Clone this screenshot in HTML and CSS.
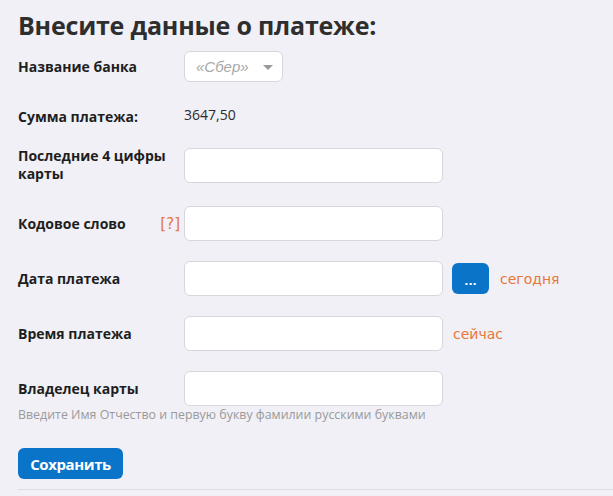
FILE: index.html
```html
<!DOCTYPE html>
<html lang="ru">
<head>
<meta charset="utf-8">
<link rel="stylesheet" href="styles.css">
</head>
<body>
<div class="page">
  <h1 class="title">Внесите данные о платеже:</h1>
  <form class="form">
    <div class="row row-bank">
      <div class="label">Название банка</div>
      <div class="control">
        <div class="select"><span class="select-text">«Сбер»</span><span class="caret"></span></div>
      </div>
    </div>
    <div class="row row-sum">
      <div class="label">Сумма платежа:</div>
      <div class="control"><span class="sum">3647,50</span></div>
    </div>
    <div class="row row-card">
      <div class="label">Последние 4 цифры карты</div>
      <div class="control"><input class="input" type="text"></div>
    </div>
    <div class="row row-code">
      <div class="label label-help">Кодовое слово <span class="help">[?]</span></div>
      <div class="control"><input class="input" type="text"></div>
    </div>
    <div class="row">
      <div class="label">Дата платежа</div>
      <div class="control"><input class="input" type="text"><button type="button" class="dots">...</button><span class="link link-today">сегодня</span></div>
    </div>
    <div class="row">
      <div class="label">Время платежа</div>
      <div class="control"><input class="input" type="text"><span class="link link-now">сейчас</span></div>
    </div>
    <div class="row">
      <div class="label">Владелец карты</div>
      <div class="control"><input class="input" type="text"></div>
    </div>
    <div class="hint">Введите Имя Отчество и первую букву фамилии русскими буквами</div>
    <div class="actions"><button type="button" class="save">Сохранить</button></div>
  </form>
</div>
</body>
</html>
```
FILE: styles.css
```css
html, body {
  margin: 0;
  padding: 0;
  background: #f0f0f6;
}
.page {
  padding: 8px 0 0 18px;
  color: #222;
}
.title {
  margin: 0;
  font-family: "Open Sans", sans-serif;
  font-weight: 700;
  font-size: 25px;
  line-height: 34px;
  letter-spacing: -0.2px;
  color: #2e2e2e;
}
.form {
  display: flex;
  flex-direction: column;
}
.row {
  display: grid;
  grid-template-columns: 166px auto;
  align-items: center;
  margin-top: 20px;
}
.row-bank { margin-top: 9px; }
.row-sum { margin-top: 25px; height: 20px; }
.row-code { margin-top: 23px; }
.label {
  font-family: "Open Sans", sans-serif;
  font-weight: bold;
  font-size: 14px;
  line-height: 18px;
  color: #1e1e1e;
  padding-right: 8px;
}
.label-help {
  display: flex;
  justify-content: space-between;
  padding-right: 4px;
}
.help {
  font-family: "DejaVu Sans", sans-serif;
  font-weight: normal;
  color: #e8773a;
  font-size: 15px;
}
.control {
  display: flex;
  align-items: center;
}
.select {
  box-sizing: border-box;
  width: 99px;
  height: 31px;
  background: #fff;
  border: 1px solid #d6d6dc;
  border-radius: 6px;
  display: flex;
  align-items: center;
  padding-left: 11px;
}
.select-text {
  font-family: "Liberation Sans", sans-serif;
  font-style: italic;
  font-size: 15px;
  color: #a8a8a8;
}
.caret {
  margin-left: 14px;
  width: 0;
  height: 0;
  border-left: 5px solid transparent;
  border-right: 5px solid transparent;
  border-top: 5px solid #9a9a9a;
  margin-top: 2px;
}
.sum {
  font-family: "Open Sans", sans-serif;
  font-size: 14px;
  color: #2b2b2b;
  margin-top: -5px;
}
.input {
  box-sizing: border-box;
  width: 259px;
  height: 35px;
  margin: 0;
  background: #fff;
  border: 1px solid #d6d6dc;
  border-radius: 6px;
  outline: none;
}
.dots {
  box-sizing: border-box;
  width: 37px;
  height: 31px;
  margin-left: 9px;
  border: none;
  border-radius: 6px;
  background: #0a74c9;
  color: #fff;
  font-family: "DejaVu Sans", sans-serif;
  font-weight: bold;
  font-size: 11px;
  padding: 6px 0 0 0;
}
.link {
  font-family: "DejaVu Sans", sans-serif;
  font-size: 14px;
  color: #e8773a;
}
.link-today { margin-left: 11px; }
.link-now { margin-left: 10px; }
.hint {
  font-family: "Open Sans", sans-serif;
  font-size: 12.4px;
  line-height: 16px;
  color: #9a9a9a;
  margin-top: 1px;
}
.actions {
  margin-top: 25px;
  padding-bottom: 10px;
  border-bottom: 1px solid #dcdce2;
}
.save {
  box-sizing: border-box;
  width: 105px;
  height: 31px;
  border: none;
  border-radius: 6px;
  background: #0a74c9;
  color: #fff;
  font-family: "Open Sans", sans-serif;
  font-weight: bold;
  font-size: 15px;
  letter-spacing: -0.4px;
  padding: 0;
}
```
